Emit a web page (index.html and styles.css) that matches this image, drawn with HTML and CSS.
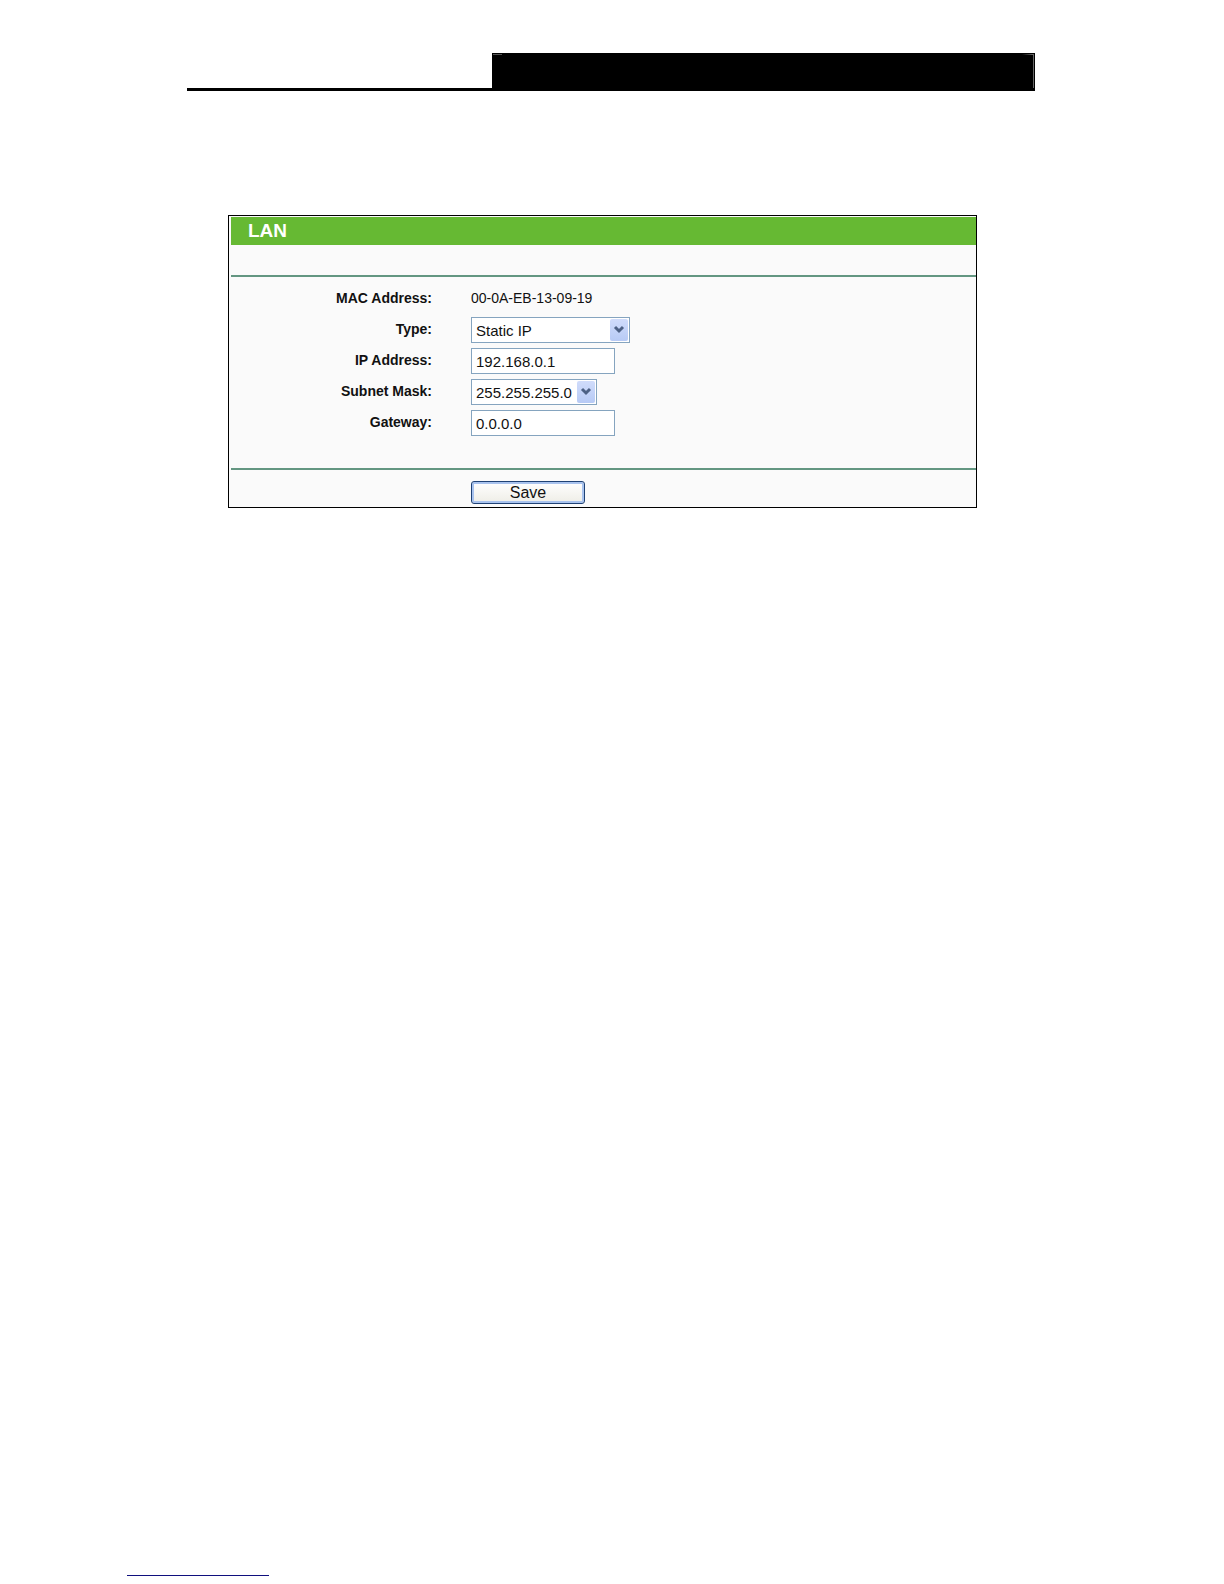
FILE: index.html
```html
<!DOCTYPE html>
<html lang="en">
<head>
    <meta charset="UTF-8">
    <meta name="viewport" content="width=device-width, initial-scale=1.0">
    <title>LAN</title>
    <link rel="stylesheet" href="styles.css">
</head>
<body>
    <header class="page-header">
        <div class="header-tab"></div>
    </header>

    <main>
        <form class="panel">
            <h1>LAN</h1>
            <div class="spacer"></div>

            <div class="fields">
                <div class="row">
                    <span class="label">MAC Address:</span>
                    <span class="value">00-0A-EB-13-09-19</span>
                </div>
                <div class="row">
                    <label class="label" for="type">Type:</label>
                    <div class="select type-select">
                        <select id="type">
                            <option>Static IP</option>
                        </select>
                        <svg class="arrow" viewBox="0 0 18 22" aria-hidden="true">
                            <path d="M5 8 L9 12 L13 8" fill="none" stroke="#4d6185" stroke-width="3"/>
                        </svg>
                    </div>
                </div>
                <div class="row">
                    <label class="label" for="ip">IP Address:</label>
                    <input type="text" id="ip" value="192.168.0.1">
                </div>
                <div class="row">
                    <label class="label" for="mask">Subnet Mask:</label>
                    <div class="select mask-select">
                        <select id="mask">
                            <option>255.255.255.0</option>
                        </select>
                        <svg class="arrow" viewBox="0 0 18 22" aria-hidden="true">
                            <path d="M5 8 L9 12 L13 8" fill="none" stroke="#4d6185" stroke-width="3"/>
                        </svg>
                    </div>
                </div>
                <div class="row">
                    <label class="label" for="gateway">Gateway:</label>
                    <input type="text" id="gateway" value="0.0.0.0">
                </div>
            </div>

            <div class="actions">
                <button type="button">Save</button>
            </div>
        </form>
    </main>

    <footer>
        <a class="footer-link" href="#" aria-label="Home"></a>
    </footer>
</body>
</html>
```
FILE: styles.css
```css
* {
    box-sizing: border-box;
}
body {
    display: flex;
    flex-direction: column;
    min-height: 100vh;
    margin: 0;
    font-family: "Liberation Sans", Arial, sans-serif;
    font-size: 14px;
    color: #111;
    background: #fff;
}

/* top rule with the black tab */
.page-header {
    margin: 53px 189px 0 187px;
    border-bottom: 3px solid #000;
}
.header-tab {
    width: 64%;
    height: 35px;
    margin-left: auto;
    border: 1px solid #000;
    border-bottom: 0;
    background:
        linear-gradient(#666, #666) right 0 top 0 / 1px 100% no-repeat,
        linear-gradient(to right, #000, #777) right 0 top 0 / 12px 1px no-repeat,
        linear-gradient(#555, #555) left 0 top 0 / 9px 1px no-repeat,
        #000;
}

/* settings panel */
.panel {
    margin: 124px 247px 0 228px;
    padding: 1px 0 0 2px;
    border: 1px solid #000;
    background: #fafafa;
}
.panel h1 {
    margin: 0;
    padding-left: 17px;
    font-size: 19px;
    line-height: 28px;
    color: #fff;
    background: #66b933;
}
.spacer {
    height: 30px;
}
.fields {
    display: grid;
    gap: 5px;
    padding: 9px 0 32px;
    border-top: 2px solid #639681;
    border-bottom: 2px solid #639681;
}
.row {
    display: grid;
    grid-template-columns: 201px 1fr;
    column-gap: 39px;
    height: 26px;
}
.label {
    font-weight: bold;
    line-height: 24px;
    text-align: right;
}
.value {
    line-height: 24px;
}

input,
select,
button {
    font-family: inherit;
    font-size: 15px;
    color: #111;
}
input,
select {
    height: 26px;
    padding: 0 4px;
    border: 1px solid #85a4bf;
    border-radius: 0;
    background: #fff;
}
input {
    width: 144px;
}
.select {
    position: relative;
}
.select select {
    width: 100%;
    appearance: none;
}
.type-select {
    width: 159px;
}
.mask-select {
    width: 126px;
}
.arrow {
    position: absolute;
    top: 2px;
    right: 2px;
    width: 18px;
    height: 22px;
    border-radius: 2px;
    background: linear-gradient(#d0dcfb, #b7caf5);
    pointer-events: none;
}

.actions {
    padding: 11px 0 3px 240px;
}
button {
    display: block;
    width: 114px;
    height: 23px;
    padding: 0;
    font-size: 16px;
    line-height: 19px;
    border: 1px solid #1f4275;
    border-radius: 3px;
    background: linear-gradient(#fff, #eeede6);
    box-shadow: inset 0 0 0 2px #a9c3ee;
}

footer {
    margin-top: auto;
    padding: 0 127px 8px;
}
.footer-link {
    display: block;
    width: 142px;
    height: 16px;
    border-bottom: 1px solid #10107e;
}
```
